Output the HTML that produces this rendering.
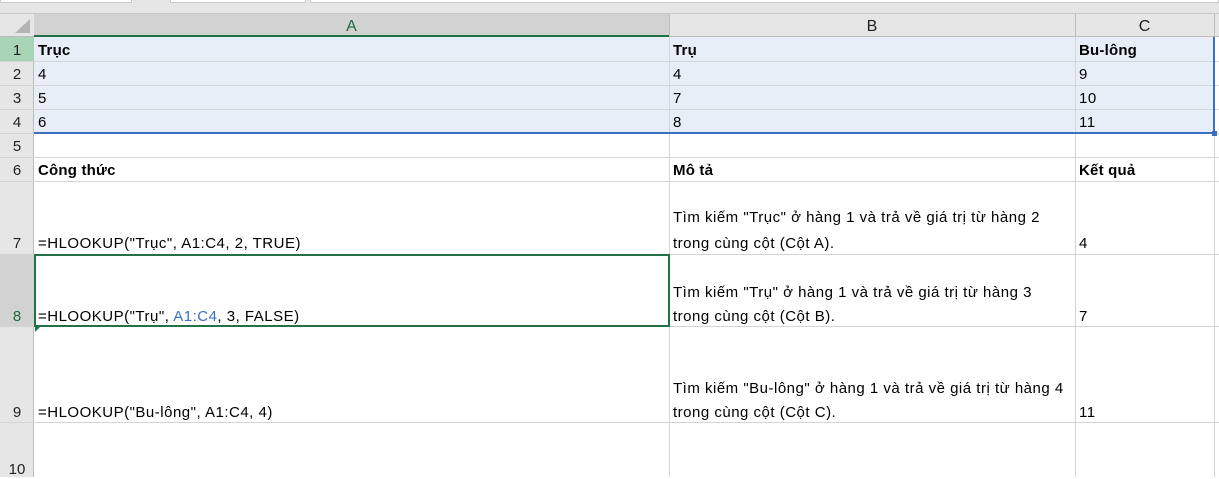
<!DOCTYPE html><html><head><meta charset="utf-8"><style>
body{margin:0;width:1219px;height:477px;overflow:hidden;background:#fff;font-family:"Liberation Sans",sans-serif;font-size:15px;letter-spacing:0.5px;color:#000;position:relative}
div{position:absolute;box-sizing:border-box}
.hl{left:0;width:1219px;height:1px;background:#d4d4d4}
.vl{width:1px;background:#d4d4d4}
.t{white-space:nowrap;line-height:18px;margin-top:2px}
.rh{left:0;width:34px;text-align:center;color:#222;font-size:15px;line-height:18px;letter-spacing:0;margin-top:2px}
.b{font-weight:bold;letter-spacing:0.2px}
</style></head><body>
<div style="left:0;top:0;width:1219px;height:14px;background:#e6e6e6;border-bottom:1px solid #c8c8c8"></div>
<div style="left:0;top:0;width:132px;height:3px;background:#fff;border:1px solid #c8c8c8;border-top:none"></div>
<div style="left:170px;top:0;width:136px;height:3px;background:#fff;border:1px solid #c8c8c8;border-top:none"></div>
<div style="left:310px;top:0;width:909px;height:3px;background:#fff;border:1px solid #c8c8c8;border-top:none"></div>
<div style="left:0;top:14px;width:1219px;height:23px;background:#e6e6e6;border-bottom:1px solid #bdbdbd"></div>
<div style="left:15px;top:19px;width:0;height:0;border-left:15px solid transparent;border-bottom:14px solid #b4b4b4"></div>
<div style="left:34px;top:14px;width:635px;height:23px;background:#d2d2d2;border-bottom:2px solid #217346"></div>
<div class="t" style="left:34px;top:16px;width:635px;text-align:center;font-size:16px;color:#1e6b3f;letter-spacing:0">A</div>
<div class="t" style="left:669px;top:16px;width:406px;text-align:center;font-size:16px;color:#222;letter-spacing:0">B</div>
<div class="t" style="left:1075px;top:16px;width:139px;text-align:center;font-size:16px;color:#222;letter-spacing:0">C</div>
<div style="left:669px;top:14px;width:1px;height:23px;background:#bdbdbd"></div>
<div style="left:1075px;top:14px;width:1px;height:23px;background:#bdbdbd"></div>
<div style="left:1214px;top:14px;width:1px;height:23px;background:#bdbdbd"></div>
<div style="left:0;top:37px;width:34px;height:440px;background:#e6e6e6;border-right:1px solid #bdbdbd"></div>
<div style="left:0;top:37px;width:34px;height:24px;background:#a9d4b5"></div>
<div style="left:0;top:254px;width:34px;height:72px;background:#d2d2d2"></div>
<div style="left:34px;top:37px;width:1181px;height:96px;background:#e8eef8"></div>
<div class="hl" style="top:61px"></div><div class="hl" style="top:85px"></div><div class="hl" style="top:109px"></div><div class="hl" style="top:133px"></div><div class="hl" style="top:157px"></div><div class="hl" style="top:181px"></div><div class="hl" style="top:254px"></div><div class="hl" style="top:326px"></div><div class="hl" style="top:422px"></div>
<div class="vl" style="left:669px;top:37px;height:440px"></div>
<div class="vl" style="left:1075px;top:37px;height:440px"></div>
<div class="vl" style="left:1214px;top:37px;height:440px"></div>
<div style="left:34px;top:132px;width:1181px;height:2px;background:#3a6fc4"></div>
<div style="left:1213px;top:37px;width:2px;height:97px;background:#3a6fc4"></div>
<div style="left:1212px;top:131px;width:5px;height:5px;background:#3a6fc4"></div>
<div style="left:34px;top:254px;width:636px;height:73px;border:2px solid #217346"></div>
<div style="left:35px;top:327px;width:0;height:0;border-top:5px solid #217346;border-right:5px solid transparent"></div>
<div class="rh" style="top:40px">1</div><div class="rh" style="top:64px">2</div><div class="rh" style="top:88px">3</div><div class="rh" style="top:112px">4</div><div class="rh" style="top:136px">5</div><div class="rh" style="top:160px">6</div><div class="rh" style="top:233px">7</div><div class="rh" style="top:306px;color:#1e6b3f">8</div><div class="rh" style="top:402px">9</div><div class="rh" style="top:459px">10</div>
<div class="t b" style="left:38px;top:40px">Trục</div><div class="t b" style="left:673px;top:40px">Trụ</div><div class="t b" style="left:1079px;top:40px">Bu-lông</div>
<div class="t" style="left:38px;top:64px">4</div><div class="t" style="left:673px;top:64px">4</div><div class="t" style="left:1079px;top:64px">9</div>
<div class="t" style="left:38px;top:88px">5</div><div class="t" style="left:673px;top:88px">7</div><div class="t" style="left:1079px;top:88px">10</div>
<div class="t" style="left:38px;top:112px">6</div><div class="t" style="left:673px;top:112px">8</div><div class="t" style="left:1079px;top:112px">11</div>
<div class="t b" style="left:38px;top:160px">Công thức</div><div class="t b" style="left:673px;top:160px">Mô tả</div><div class="t b" style="left:1079px;top:160px">Kết quả</div>
<div class="t" style="left:38px;top:233px">=HLOOKUP("Trục", A1:C4, 2, TRUE)</div>
<div class="t" style="left:673px;top:207px">Tìm kiếm "Trục" ở hàng 1 và trả về giá trị từ hàng 2</div>
<div class="t" style="left:673px;top:233px">trong cùng cột (Cột A).</div>
<div class="t" style="left:1079px;top:233px">4</div>
<div class="t" style="left:38px;top:306px">=HLOOKUP("Trụ", <span style="color:#3a6fc4">A1:C4</span>, 3, FALSE)</div>
<div class="t" style="left:673px;top:282px">Tìm kiếm "Trụ" ở hàng 1 và trả về giá trị từ hàng 3</div>
<div class="t" style="left:673px;top:306px">trong cùng cột (Cột B).</div>
<div class="t" style="left:1079px;top:306px">7</div>
<div class="t" style="left:38px;top:402px">=HLOOKUP("Bu-lông", A1:C4, 4)</div>
<div class="t" style="left:673px;top:378px">Tìm kiếm "Bu-lông" ở hàng 1 và trả về giá trị từ hàng 4</div>
<div class="t" style="left:673px;top:402px">trong cùng cột (Cột C).</div>
<div class="t" style="left:1079px;top:402px">11</div>
</body></html>
